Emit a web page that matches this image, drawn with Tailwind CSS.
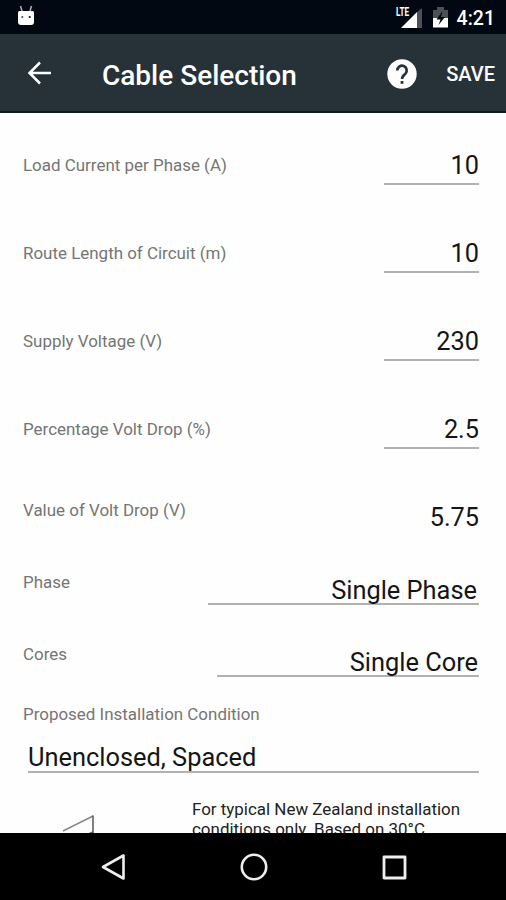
<!DOCTYPE html>
<html lang="en">
<head>
<meta charset="utf-8">
<title>Cable Selection</title>
<script src="https://cdn.jsdelivr.net/npm/@tailwindcss/browser@4"></script>
</head>
<body class="bg-white font-['Roboto',sans-serif]">
<div class="flex h-[900px] w-[506px] flex-col overflow-hidden bg-[#fefefe]">
  <!-- Status bar -->
  <div class="flex h-[34px] shrink-0 items-start bg-[#010811] text-white">
    <svg class="ml-[17px] mt-[5px]" width="18" height="21" viewBox="0 0 18 21">
      <path d="M3.500 1 5 6M14.500 1 13 6" stroke="#aaa" stroke-width="1.600"/>
      <path d="M1 7.500Q1 6 2.500 6h13Q17 6 17 7.500V17q0 3-3 3H4q-3 0-3-3z" fill="#fff"/>
      <circle cx="5.300" cy="12" r="1.100" fill="#555"/><circle cx="12.700" cy="12" r="1.100" fill="#111"/>
    </svg>
    <div class="relative ml-auto h-[34px] w-[26px]">
      <span class="absolute left-[1px] top-[6px] origin-left scale-x-[.68] text-[12px] font-bold leading-[12px]">LTE</span>
      <svg class="absolute left-[6px] top-[8px]" width="22" height="20" viewBox="0 0 22 20">
        <path d="M16 4 21 0V20H16z" fill="#4b5157"/><path d="M0 20 16 4V20z" fill="#fff"/>
      </svg>
    </div>
    <svg class="ml-[12px] mt-[7px]" width="15" height="21" viewBox="0 0 15 21">
      <path d="M0 3h4V0h7v3h4v8H0z" fill="#4b5157"/><path d="M0 11h15v9.500H0z" fill="#fff"/>
      <path d="M9.500 4 3.500 12.500h4L5.500 18l6.500-8H8z" fill="#010811"/>
    </svg>
    <span class="ml-[9px] mr-[11px] mt-[7px] text-[19.5px] font-medium leading-[23px]">4:21</span>
  </div>
  <!-- App bar -->
  <div class="flex h-[79px] shrink-0 items-center border-b-2 border-[#10191d] bg-[#263238] text-white">
    <svg class="ml-[27px]" width="25" height="24" viewBox="0 0 25 24" fill="none" stroke="#fff" stroke-width="2.500"><path d="M24 12H3M13 1.500 2.500 12 13 22.500"/></svg>
    <h1 class="ml-[50px] mt-[7px] text-[28px] font-medium leading-[32px]">Cable Selection</h1>
    <svg class="ml-auto mt-[2px]" width="30" height="30" viewBox="0 0 30 30">
      <circle cx="15" cy="15" r="14.700" fill="#fff"/>
      <path d="M10.300 11.500a4.700 4.700 0 1 1 8.200 3.100C16.800 16.300 15 17 15 20" fill="none" stroke="#263238" stroke-width="2.700"/>
      <path d="M13.600 22h2.800v2.800h-2.800z" fill="#263238"/>
    </svg>
    <span class="ml-[29px] mr-[11px] mt-[3px] text-[20px] font-medium leading-[24px]">SAVE</span>
  </div>
  <!-- Form -->
  <main class="min-h-0 flex-1 overflow-hidden pl-[23px] pr-[27px] text-[16.95px] leading-[20px] text-[#757575]">
    <div class="flex h-[72px] items-end justify-between"><span class="mb-[10px]">Load Current per Phase (A)</span><span class="w-[95px] border-b-2 border-[#b2b2b2] pb-[2px] text-right text-[25.3px] leading-[30px] text-[#151515]">10</span></div>
    <div class="flex h-[88px] items-end justify-between"><span class="mb-[10px]">Route Length of Circuit (m)</span><span class="w-[95px] border-b-2 border-[#b2b2b2] pb-[2px] text-right text-[25.3px] leading-[30px] text-[#151515]">10</span></div>
    <div class="flex h-[88px] items-end justify-between"><span class="mb-[10px]">Supply Voltage (V)</span><span class="w-[95px] border-b-2 border-[#b2b2b2] pb-[2px] text-right text-[25.3px] leading-[30px] text-[#151515]">230</span></div>
    <div class="flex h-[88px] items-end justify-between"><span class="mb-[10px]">Percentage Volt Drop (%)</span><span class="w-[95px] border-b-2 border-[#b2b2b2] pb-[2px] text-right text-[25.3px] leading-[30px] text-[#151515]">2.5</span></div>
    <div class="flex h-[83px] items-end justify-between"><span class="mb-[12px]">Value of Volt Drop (V)</span><span class="text-right text-[25.3px] leading-[28px] text-[#151515]">5.75</span></div>
    <div class="flex h-[73px] items-end justify-between"><span class="mb-[13px]">Phase</span><span class="w-[271px] border-b-2 border-[#b2b2b2] pr-[2px] text-right text-[25.4px] leading-[26px] text-[#151515]">Single Phase</span></div>
    <div class="flex h-[72px] items-end justify-between"><span class="mb-[13px]">Cores</span><span class="w-[262px] border-b-2 border-[#b2b2b2] pr-[1px] text-right text-[25.4px] leading-[26px] text-[#151515]">Single Core</span></div>
    <div class="mt-[27px]">Proposed Installation Condition</div>
    <div class="ml-[5px] mt-[20px] border-b-2 border-[#b2b2b2] text-[25.4px] leading-[27px] text-[#151515]">Unenclosed, Spaced</div>
    <div class="flex pt-[26px]">
      <svg class="ml-[37px] mt-[15px] shrink-0" width="36" height="40" viewBox="0 0 36 40" fill="none" stroke="#555" stroke-width="1.500"><path d="M3 17 33 2" stroke="#888"/><path d="M33 1.500V21M33 18 26 21"/></svg>
      <p class="ml-[96px] whitespace-nowrap text-[16.95px] leading-[20px] text-[#222]">For typical New Zealand installation<br>conditions only. Based on 30°C</p>
    </div>
  </main>
  <!-- Navigation bar -->
  <nav class="flex h-[67px] shrink-0 items-center bg-black">
    <svg class="ml-[100px]" width="26" height="28" viewBox="0 0 26 28" fill="none" stroke="#eee" stroke-width="2.600" stroke-linejoin="round"><path d="M23.500 2.500V25.500L3 14z"/></svg>
    <svg class="ml-[114px]" width="28" height="28" viewBox="0 0 28 28" fill="none" stroke="#eee" stroke-width="2.600"><circle cx="14" cy="14" r="12.200"/></svg>
    <svg class="ml-[114px] mt-[1px]" width="25" height="25" viewBox="0 0 25 25" fill="none" stroke="#eee" stroke-width="2.800" stroke-linejoin="round"><path d="M2 2H23V23H2z"/></svg>
  </nav>
</div>
</body>
</html>
